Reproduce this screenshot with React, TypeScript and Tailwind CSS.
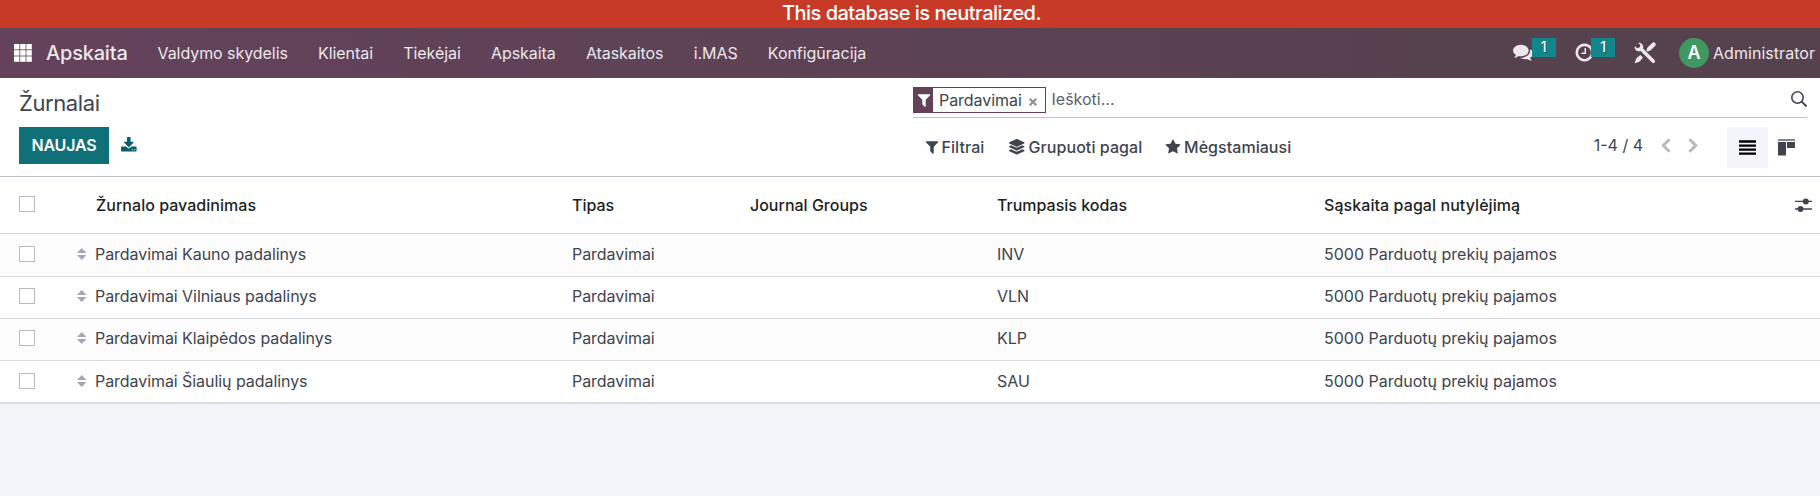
import { FaLayerGroup } from "react-icons/fa";

const FILTER =
  "M1595 295q17 41-14 70l-493 493v742q0 42-39 59-13 5-25 5-27 0-45-19l-256-256q-19-19-19-45v-486l-493-493q-31-29-14-70 17-39 59-39h1280q42 0 59 39z";
const COMMENTS =
  "M1408 768q0 139-94 257t-256.5 186.5-353.5 68.5q-86 0-176-16-124 88-278 128-36 9-86 16h-3q-11 0-20.5-8t-11.5-21q-1-3-1-6.5t.5-6.5 2-6l2.5-5 3.5-5.5 4-5 4.5-5 4-4.5q5-6 23-25t26-29.5 22.5-29 25-38.5 20.5-44q-124-72-195-177t-71-224q0-139 94-257t256.5-186.5 353.5-68.5 353.5 68.5 256.5 186.5 94 257zm384 256q0 120-71 224.5t-195 176.5q10 24 20.5 44t25 38.5 22.5 29 26 29.5 23 25q1 1 4 4.5t4.5 5 4 5 3.5 5.5l2.5 5 2 6 .5 6.5-1 6.5q-3 14-13 22t-22 7q-50-7-86-16-154-40-278-128-90 16-176 16-271 0-472-132 58 4 88 4 161 0 309-45t264-129q125-92 192-212t67-254q0-77-23-152 129 71 204 178t75 230z";
const CLOCK =
  "M1024 544v448q0 14-9 23t-23 9h-320q-14 0-23-9t-9-23v-64q0-14 9-23t23-9h224v-352q0-14 9-23t23-9h64q14 0 23 9t9 23zm416 352q0-148-73-273t-198-198-273-73-273 73-198 198-73 273 73 273 198 198 273 73 273-73 198-198 73-273zm224 0q0 209-103 385.5t-279.5 279.5-385.5 103-385.5-103-279.5-279.5-103-385.5 103-385.5 279.5-279.5 385.5-103 385.5 103 279.5 279.5 103 385.5z";
const STAR =
  "M1728 647q0 22-26 48l-363 354 86 500q1 7 1 20 0 21-10.5 35.5t-30.5 14.5q-19 0-40-12l-449-236-449 236q-22 12-40 12-21 0-31.5-14.5t-10.5-35.5q0-6 2-20l86-500-364-354q-25-27-25-48 0-37 56-46l502-73 225-455q19-41 49-41t49 41l225 455 502 73q56 9 56 46z";
const DOWNLOAD =
  "M1344 1344q0-26-19-45t-45-19-45 19-19 45 19 45 45 19 45-19 19-45zm256 0q0-26-19-45t-45-19-45 19-19 45 19 45 45 19 45-19 19-45zm128-224v320q0 40-28 68t-68 28h-1472q-40 0-68-28t-28-68v-320q0-40 28-68t68-28h465l135 136q58 56 136 56t136-56l136-136h464q40 0 68 28t28 68zm-325-569q17 41-14 70l-448 448q-18 19-45 19t-45-19l-448-448q-31-29-14-70 17-39 59-39h256v-448q0-26 19-45t45-19h256q26 0 45 19t19 45v448h256q42 0 59 39z";

function Glyph({ d, className, box = "0 0 1792 1792" }: { d: string; className: string; box?: string }) {
  return (
    <svg viewBox={box} fill="currentColor" className={`shrink-0 ${className}`}>
      <path d={d} />
    </svg>
  );
}

const MENU = ["Valdymo skydelis", "Klientai", "Tiekėjai", "Apskaita", "Ataskaitos", "i.MAS", "Konfigūracija"];

const ROWS = [
  { name: "Pardavimai Kauno padalinys", code: "INV", row: "h-[43px] bg-[#fcfcfc]", cell: "h-[42px]" },
  { name: "Pardavimai Vilniaus padalinys", code: "VLN", row: "h-[42px] bg-white", cell: "h-[40px]" },
  { name: "Pardavimai Klaipėdos padalinys", code: "KLP", row: "h-[42px] bg-[#fcfcfc]", cell: "h-[40px]" },
  { name: "Pardavimai Šiaulių padalinys", code: "SAU", row: "h-[41px] bg-white", cell: "h-[42px]" },
];

const COLS = "grid grid-cols-[75px_20px_477px_178px_247px_327px_1fr]";

function Checkbox() {
  return <span className="ml-[19px] block size-4 border border-[#b9bbbf] bg-white" />;
}

function Banner() {
  return (
    <div className="h-7 bg-[#c73a27] pl-[3px] text-center text-[20px] leading-[26px] font-medium tracking-[-0.51px] text-white">
      This database is neutralized.
    </div>
  );
}

function CountBadge({ className }: { className: string }) {
  return (
    <span className={`h-[19px] w-6 bg-[#12868a] text-center text-[14px] leading-[17px] font-medium text-white [text-shadow:1px_1px_0_#0006] ${className}`}>
      1
    </span>
  );
}

function Navbar() {
  return (
    <nav className="flex h-[50px] items-center bg-[linear-gradient(90deg,#64425b,#5c4254_50%,#56414f_82%)] text-[16px] text-[#ece8eb]">
      <svg viewBox="0 0 18 18" className="ml-[14px] size-[18px] fill-white">
        {[0, 6.2, 12.4].map((y) => [0, 6.2, 12.4].map((x) => <rect key={`${x}-${y}`} x={x} y={y} width="5.4" height="5.4" />))}
      </svg>
      <span className="ml-[14px] w-[111.5px] text-[20px] font-medium tracking-[-0.2px]">Apskaita</span>
      <div className="flex gap-[30.2px] pb-px tracking-[-0.06px]">
        {MENU.map((m) => (
          <span key={m}>{m}</span>
        ))}
      </div>
      <div className="ml-auto flex h-full">
        <Glyph d={COMMENTS} className="mt-[14px] size-5" />
        <CountBadge className="mt-[10px] -ml-px" />
        <Glyph d={CLOCK} className="mt-[13.5px] ml-[18px] size-[21px]" />
        <CountBadge className="mt-[10px] -ml-[3.5px]" />
        <svg viewBox="0 0 22 22" className="mt-[13.5px] ml-[19px] size-[22px]" fill="none" stroke="currentColor">
          <path d="M6.6 6.6 19.3 19.3" strokeWidth="3.6" strokeLinecap="round" />
          <path d="M4.1.9 6.4 3.1 5.8 5.6 3.2 6.3.9 4.1C.2 6.5 1.5 8.8 3.8 9.2c1 .2 2 0 2.9-.5L8.9 6.6C9.600 5 9.300 3 7.900 1.900 6.800.900 5.400.500 4.100.900z" fill="currentColor" stroke="none" />
          <path d="M15.2 6.800 19.600 2.500" strokeWidth="4.2" strokeLinecap="round" />
          <path d="M13 9 15.500 6.500" strokeWidth="2.400" />
          <path d="M6.300 12.900 9 15.600 5.800 19.500 1.200 21.300.7 20.800 2.500 16.200z" fill="currentColor" stroke="none" />
        </svg>
        <span className="mt-[10px] ml-[23px] flex size-[30px] items-center justify-center rounded-full bg-[#3f9862] text-[18px] font-semibold text-white">
          A
        </span>
        <span className="mt-[13px] mr-[5px] ml-1 tracking-[0.04px]">Administrator</span>
      </div>
    </nav>
  );
}

function ControlPanel() {
  return (
    <div className="flex h-[99px] border-b border-[#c2c4cc] bg-white text-[16px] text-[#40444f]">
      <div className="w-[913px] pl-[19px]">
        <h1 className="mt-[9px] h-8 text-[22px] leading-8 tracking-[-0.4px]">Žurnalai</h1>
        <div className="mt-2 flex items-center">
          <button className="h-[37px] w-[90px] bg-[#107077] pb-[2px] font-semibold tracking-[-0.15px] text-white">NAUJAS</button>
          <Glyph d={DOWNLOAD} box="64 0 1664 1536" className="-mt-[2px] ml-3 h-[14.4px] w-[15.6px] text-[#0c5f66]" />
        </div>
      </div>
      <div className="w-[894px]">
        <div className="flex h-10 items-start border-b border-[#c2c4cc] pt-[9px]">
          <div className="flex h-[26px] w-[133px] items-center border border-[#64425b]">
            <span className="flex h-full w-[19px] items-center justify-center bg-[#64425b] text-white">
              <Glyph d={FILTER} className="size-4" />
            </span>
            <span className="ml-[6px] tracking-[-0.05px]">Pardavimai</span>
            <svg viewBox="0 0 8 8" className="mt-[3px] ml-[7.5px] size-2" stroke="#8d8f93" strokeWidth="2.1">
              <path d="M.7.7 7.3 7.3M7.3.7.7 7.3" />
            </svg>
          </div>
          <span className="ml-[5.5px] text-[#5d616b]">Ieškoti...</span>
          <svg viewBox="0 0 16 16" className="mt-[4px] ml-auto size-4" fill="none" stroke="currentColor" strokeWidth="1.6">
            <circle cx="6.5" cy="6.5" r="5.7" />
            <path d="M10.6 10.6 15.6 15.5" strokeWidth="2" />
          </svg>
        </div>
        <div className="flex">
          <div className="mt-[17px] flex h-6 items-center font-medium tracking-[0.07px]">
            <Glyph d={FILTER} className="ml-[10.5px] size-4" />
            <span className="ml-[2px] w-[67.5px]">Filtrai</span>
            <FaLayerGroup className="size-[15.5px]" />
            <span className="ml-1 w-[136.5px]">Grupuoti pagal</span>
            <Glyph d={STAR} className="size-4" />
            <span className="ml-[3px] tracking-[0.04px]">Mėgstamiausi</span>
          </div>
          <div className="ml-auto flex">
            <span className="mt-[15px]">1-4 / 4</span>
            <svg viewBox="0 0 10 15" className="mt-[19.5px] ml-[17.5px] h-[15px] w-[10px]" fill="none" stroke="#b9bbc2" strokeWidth="3">
              <path d="M8.6 1.2 2.3 7.5 8.6 13.8" />
            </svg>
            <svg viewBox="0 0 10 15" className="mt-[19.5px] ml-[17px] h-[15px] w-[10px]" fill="none" stroke="#b9bbc2" strokeWidth="3">
              <path d="M1.4 1.2 7.7 7.5 1.4 13.8" />
            </svg>
            <span className="mt-[9px] ml-[29.5px] flex h-[41px] w-[41px] justify-center bg-[#f4f5fa] pt-[13px]">
              <svg viewBox="0 0 17 15" className="h-[15px] w-[17px] fill-black">
                <path d="M0 .3h17v2.4H0zM0 4.4h17v2.4H0zM0 8.4h17v2.4H0zM0 12.4h17v2.4H0z" />
              </svg>
            </span>
            <svg viewBox="0 0 17 17" className="mt-[21px] mr-[12px] ml-[10px] size-[17px] fill-current">
              <path d="M0 0h17v2H0z" opacity=".65" />
              <path d="M0 3h8v13.6H0zM9 3h8v6H9z" />
            </svg>
          </div>
        </div>
      </div>
    </div>
  );
}

function JournalTable() {
  return (
    <div className="border-b-2 border-[#d9dbe1] bg-white text-[16px] text-[#40444f]">
      <div className={`${COLS} h-[57px] items-center border-b border-[#d8dade] font-medium text-[#1c1f25]`}>
        <div className="pb-[2px]">
          <Checkbox />
        </div>
        <span />
        <span className="pl-px tracking-[0.03px]">Žurnalo pavadinimas</span>
        <span>Tipas</span>
        <span>Journal Groups</span>
        <span>Trumpasis kodas</span>
        <span className="flex items-center justify-between pr-2">
          <span className="tracking-[0.07px]">Sąskaita pagal nutylėjimą</span>
          <svg viewBox="0 0 17 14" className="h-[14px] w-[17px] text-[#40444f]" fill="currentColor">
            <path d="M0 2.7h17v1.4H0zM0 10.3h17v1.4H0z" />
            <circle cx="10.8" cy="3.4" r="3" />
            <circle cx="5.5" cy="11" r="3" />
          </svg>
        </span>
      </div>
      {ROWS.map((r) => (
        <div key={r.code} className={`${r.row} border-b border-[#d8dade] last:border-b-0`}>
          <div className={`${COLS} ${r.cell} items-center pb-[2px] tracking-[-0.06px]`}>
            <Checkbox />
            <svg viewBox="0 0 10 13" preserveAspectRatio="none" className="ml-[1.5px] h-[12px] w-[9.5px] fill-[#a0a9b3]">
              <path d="M0 5.5 5 0 10 5.5zM0 7.5 5 13 10 7.5z" />
            </svg>
            <span>{r.name}</span>
            <span>Pardavimai</span>
            <span />
            <span className="tracking-normal">{r.code}</span>
            <span className="tracking-normal">5000 Parduotų prekių pajamos</span>
          </div>
        </div>
      ))}
    </div>
  );
}

export default function App() {
  return (
    <div className="h-[496px] w-full overflow-hidden bg-[#f4f5fa] font-['Inter',sans-serif] leading-6">
      <Banner />
      <Navbar />
      <ControlPanel />
      <JournalTable />
    </div>
  );
}
